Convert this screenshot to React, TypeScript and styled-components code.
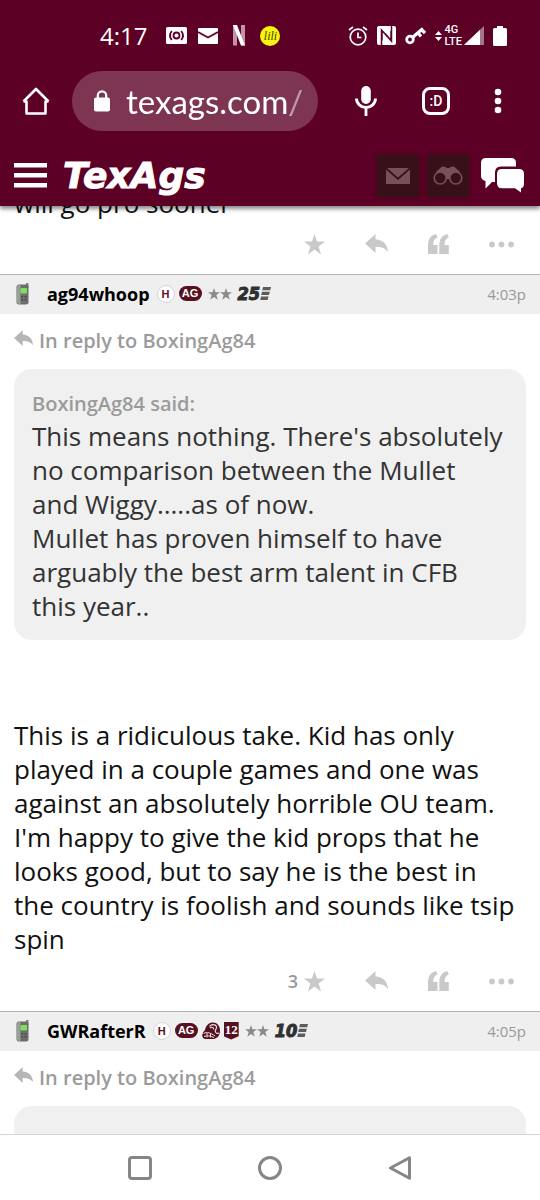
import React from "react";
import styled, { createGlobalStyle } from "styled-components";

const maroon = "#5c0025";
const sans = `"Open Sans", "Noto Sans", sans-serif`;

const GlobalStyle = createGlobalStyle`
  * { box-sizing: border-box; }
  body { margin: 0; background: #fff; font-family: ${sans}; color: #111; }
  button { background: none; border: 0; padding: 0; margin: 0; font: inherit; color: inherit; cursor: pointer; }
  svg { display: block; flex: none; }
  p { margin: 0; }
`;

const Screen = styled.div`
  display: flex;
  flex-direction: column;
  height: 100vh;
`;

const TopChrome = styled.div`
  position: relative;
  z-index: 1;
  flex: none;
  background: ${maroon};
  color: #fff;
  box-shadow: 0 3px 4px rgba(0, 0, 0, 0.45);
`;

const StatusBar = styled.div`
  display: flex;
  align-items: center;
  justify-content: space-between;
  height: 71px;
  padding: 0 33px 0 100px;
`;

const StatusGroup = styled.div<{ $gap: number }>`
  display: flex;
  align-items: center;
  gap: ${(p) => p.$gap}px;
`;

const Clock = styled.time`
  margin-right: 8px;
  font-size: 24px;
  line-height: 30px;
`;

const LiliBadge = styled.span`
  display: grid;
  place-items: center;
  width: 20px;
  height: 20px;
  border-radius: 50%;
  background: #f6f50c;
  color: #4a4300;
  font: italic 12px/20px "Liberation Serif", serif;
`;

const Network = styled.span`
  display: flex;
  flex-direction: column;
  font: 500 11px/12px Roboto, sans-serif;
`;

const BrowserBar = styled.div`
  display: flex;
  align-items: center;
  height: 60px;
  padding: 0 38px 0 22px;
`;

const AddressPill = styled.label`
  display: flex;
  flex: 1;
  align-items: center;
  gap: 16px;
  min-width: 0;
  height: 60px;
  margin: 0 36px 0 22px;
  padding: 0 8px 0 22px;
  border-radius: 30px;
  background: #7d3552;
`;

const AddressInput = styled.input`
  flex: 1;
  min-width: 0;
  padding: 0;
  border: 0;
  outline: 0;
  background: none;
  color: #fff;
  font: 33px/40px Lato, sans-serif;
  mask-image: linear-gradient(to right, #000 163px, rgba(0, 0, 0, 0.5) 165px);
`;

const BrowserActions = styled.div`
  display: flex;
  align-items: center;
  gap: 44px;
`;

const TabsButton = styled.button`
  width: 28px;
  height: 28px;
  border: 3px solid #fff;
  border-radius: 8px;
  font: 500 14px/20px Roboto, sans-serif;
`;

const SiteBar = styled.header`
  display: flex;
  align-items: center;
  height: 75px;
  padding: 14px 16px 0 14px;
`;

const Logo = styled.a`
  margin-left: 16px;
  color: #fff;
  text-decoration: none;
  font: italic bold 36px/40px "DejaVu Sans", sans-serif;
  -webkit-text-stroke: 1px #fff;
`;

const SiteActions = styled.nav`
  display: flex;
  align-items: center;
  gap: 8px;
  margin-left: auto;
`;

const DarkButton = styled.button`
  display: grid;
  place-items: center;
  width: 42px;
  height: 42px;
  background: #38101a;
  box-shadow: 0 0 3px #38101a;
  color: #775158;
`;

const ChatButton = styled.button`
  margin-left: 4px;
`;

const Feed = styled.main`
  flex: 1;
  min-height: 0;
  overflow: hidden;
`;

const CutLine = styled.p`
  display: flex;
  align-items: flex-end;
  height: 14px;
  padding: 0 14px;
  overflow: hidden;
  font-size: 26px;
  line-height: 34px;
`;

const ActionRow = styled.div`
  display: flex;
  align-items: center;
  justify-content: flex-end;
  gap: 40px;
  height: 48px;
  margin-bottom: 6px;
  padding-right: 26px;
  color: #c9c9c9;
`;

const StarButton = styled.button`
  display: flex;
  align-items: center;
  gap: 6px;
`;

const StarCount = styled.span`
  color: #9b9b9b;
  font-size: 18px;
  font-weight: 600;
  line-height: 24px;
`;

const PostBar = styled.header`
  display: flex;
  align-items: center;
  height: 40px;
  padding: 0 14px 2px 16px;
  border-top: 1px solid #b4b4b4;
  background: #efefef;
`;

const UserName = styled.a`
  margin: 0 7px 0 17px;
  color: #000;
  text-decoration: none;
  font-size: 18px;
  font-weight: 700;
  line-height: 24px;
`;

const Badges = styled.span`
  display: flex;
  align-items: center;
  gap: 4px;
`;

const HBadge = styled.span`
  width: 18px;
  height: 18px;
  border: 1px solid #d8d2d3;
  border-radius: 50%;
  background: #fff;
  color: #5c1020;
  text-align: center;
  font: bold 11px/16px "Liberation Sans", sans-serif;
`;

const AgBadge = styled.span`
  width: 23px;
  height: 15px;
  border-radius: 8px;
  background: #561020;
  color: #fff;
  text-align: center;
  font: bold 11px/15px "Liberation Sans", sans-serif;
`;

const ShieldBadge = styled.span`
  width: 15px;
  height: 18px;
  background: #561020;
  clip-path: polygon(0 0, 100% 0, 100% 82%, 50% 100%, 0 82%);
  color: #fff;
  text-align: center;
  font: bold 13px/15px "Liberation Serif", serif;
`;

const Years = styled.span`
  display: flex;
  align-items: center;
  color: #303030;
  font: italic bold 18px/20px "DejaVu Sans Condensed", "DejaVu Sans", sans-serif;
  -webkit-text-stroke: 1px #303030;
`;

const PostTime = styled.time`
  margin-left: auto;
  color: #999;
  font-size: 15px;
  line-height: 24px;
`;

const ReplyTo = styled.a`
  display: flex;
  align-items: center;
  gap: 6px;
  height: 55px;
  padding: 0 14px 2px;
  color: #9b9b9b;
  text-decoration: none;
  font-size: 20px;
  font-weight: 600;
  line-height: 28px;

  svg {
    margin-bottom: 5px;
    color: #b6b6b6;
  }
`;

const Quote = styled.blockquote`
  min-height: 80px;
  margin: 0 14px;
  padding: 20px 18px 17px;
  border-radius: 18px;
  background: #f0f0f0;
  color: #333;
  font-size: 26px;
  line-height: 34px;
`;

const QuoteAuthor = styled.cite`
  display: block;
  color: #9b9b9b;
  font-size: 20px;
  font-style: normal;
  font-weight: 600;
  line-height: 30px;
`;

const PostText = styled.p`
  padding: 78px 20px 1px 14px;
  font-size: 26px;
  line-height: 34px;
`;

const NavBar = styled.nav`
  display: flex;
  flex: none;
  height: 66px;
  padding: 0 14%;
  border-top: 1px solid #d6d6d6;
  background: #fff;
`;

const NavButton = styled.button`
  display: grid;
  flex: 1;
  place-items: center;
`;

const StarIcon = ({ size = 21 }: { size?: number }) => (
  <svg width={size} height={size} viewBox="0 0 21 21" fill="currentColor">
    <path d="M10.5 0 13 7.6h8l-6.4 4.8 2.4 8-6.5-4.8L4 20.400l2.400-8L0 7.600h8z" />
  </svg>
);

const ReplyIcon = ({ width = 23 }: { width?: number }) => (
  <svg width={width} height={Math.round(width * 0.87)} viewBox="0 0 23 20" fill="currentColor">
    <path d="M0 9.500 10.500 0v5.200C18 5.800 22.500 10 23 18c-3-4-6.500-5.200-12.500-5v6z" />
  </svg>
);

const QuoteIcon = () => (
  <svg width="21" height="20" viewBox="0 0 21 20" fill="currentColor">
    <path d="M0 20v-8C0 5 2.500 1.500 8 0l1.500 3.200C6.500 4.500 5.200 7 5.200 11h4.300v9zM11.300 20v-8c0-7 2.500-10.500 8-12l1.500 3.200c-3 1.300-4.300 3.800-4.300 7.800h4.300v9z" />
  </svg>
);

const DotsIcon = () => (
  <svg width="25" height="7" viewBox="0 0 25 7" fill="currentColor">
    <circle cx="3" cy="3.500" r="2.900" />
    <circle cx="12.500" cy="3.500" r="2.900" />
    <circle cx="22" cy="3.500" r="2.900" />
  </svg>
);

const PhoneIcon = () => (
  <svg width="14" height="22" viewBox="0 0 14 22">
    <path d="M10 0h2.500v5H10z" fill="#7f837f" />
    <rect x="0.500" y="1.500" width="12" height="20" rx="2.500" fill="#6b6f6c" />
    <path d="M1 4Q1 2 3 2h1.500v19H3q-2 0-2-2z" fill="#9a9e9b" />
    <rect x="4.500" y="5" width="6.500" height="5.500" rx="1" fill="#7fe05c" />
    <path d="M5 13h2v1.500H5zM8.500 13h2v1.500h-2zM5 16h2v1.500H5zM8.500 16h2v1.500h-2z" fill="#4a4d4b" />
  </svg>
);

const HelmetIcon = () => (
  <svg width="18" height="18" viewBox="0 0 18 18">
    <path d="M3 8C4 3 7 .5 11 .5s7 3.500 7 8-2 8-7 8.500H3q-3-1-2.800-4Q.5 10 3 8z" fill="#561020" />
    <path d="M7.500 4.500C9 2 13.500 1.800 14.500 4.500c.6 2-1.500 3-1.200 5 .3 1.500 2 2.500 3.700 1.500M8 6c2-1.500 4-.5 3.500 1.500" fill="none" stroke="#e8dce0" strokeWidth="1.200" />
    <path d="M1.500 11.500C5 9.500 9 11 13 14M2 14.500c3-1 6-1 10 1M5 11v4.500M8.500 11.500v4" fill="none" stroke="#e8dce0" />
  </svg>
);

const Stripes = () => (
  <svg width="11" height="13" viewBox="0 0 11 13" fill="#5c5c5c">
    <path d="M3 0h8l-.8 3.300H2.200zM2 4.800h7.800L9 8.100H1.200zM1 9.600h7.500L7.700 13H.2z" />
  </svg>
);

const PostActions = ({ stars }: { stars?: number }) => (
  <ActionRow>
    <StarButton aria-label="Star">
      {stars !== undefined && <StarCount>{stars}</StarCount>}
      <StarIcon />
    </StarButton>
    <button aria-label="Reply"><ReplyIcon /></button>
    <button aria-label="Quote"><QuoteIcon /></button>
    <button aria-label="More"><DotsIcon /></button>
  </ActionRow>
);

const TwoStars = styled.span`
  display: flex;
  margin: 0 2px;
  color: #8b8b8b;
`;

type HeadingProps = { user: string; years: number; time: string; extra?: boolean };

const PostHeading = ({ user, years, time, extra }: HeadingProps) => (
  <PostBar>
    <PhoneIcon />
    <UserName href="#user">{user}</UserName>
    <Badges>
      <HBadge>H</HBadge>
      <AgBadge>AG</AgBadge>
      {extra && <HelmetIcon />}
      {extra && <ShieldBadge>12</ShieldBadge>}
      <TwoStars>
        <StarIcon size={12} />
        <StarIcon size={12} />
      </TwoStars>
      <Years>{years}<Stripes /></Years>
    </Badges>
    <PostTime>{time}</PostTime>
  </PostBar>
);

export default function App() {
  return (
    <Screen>
      <GlobalStyle />
      <TopChrome>
        <StatusBar>
          <StatusGroup $gap={11}>
            <Clock>4:17</Clock>
            <svg width="21" height="17" viewBox="0 0 21 17">
              <rect width="21" height="17" rx="1.500" fill="#fff" />
              <g fill="none" stroke={maroon} strokeWidth="1.800">
                <circle cx="10.500" cy="8.500" r="3" />
                <path d="M5.800 4q-3.600 4.500 0 9M15.200 4q3.600 4.500 0 9" />
              </g>
            </svg>
            <svg width="20" height="16" viewBox="0 0 20 16">
              <rect width="20" height="16" rx="1" fill="#fff" />
              <path d="M0 4l10 5.500L20 4" fill="none" stroke={maroon} strokeWidth="1.800" />
            </svg>
            <svg width="20" height="21" viewBox="0 0 20 21">
              <path d="M4 0h4v20.500H4zM12 0h4v20.500h-4z" fill="#c493a8" />
              <path d="M4 0h4l8 20.500h-4z" fill="#fff" />
            </svg>
            <LiliBadge>lili</LiliBadge>
          </StatusGroup>
          <StatusGroup $gap={9}>
            <svg width="20" height="20" viewBox="0 0 20 20" fill="none" stroke="#fff" strokeWidth="1.700">
              <circle cx="10" cy="11" r="7.800" />
              <path d="M10 6.500V11.500h3.500M1 4l4-3M19 4l-4-3" />
            </svg>
            <svg width="19" height="19" viewBox="0 0 19 19">
              <rect width="19" height="19" rx="2" fill="#fff" />
              <path d="M4.500 19V4l9.500 10.500V5M5 4.500v10M14.500 0v15L8.500 8" fill="none" stroke={maroon} strokeWidth="1.500" />
            </svg>
            <svg width="21" height="19" viewBox="0 0 21 19" fill="none" stroke="#fff">
              <circle cx="5" cy="13.500" r="3.300" strokeWidth="2.800" />
              <path d="M8 11 18 2.500M13 7l3 3.500M17 4l3 3" strokeWidth="3.200" />
            </svg>
            <StatusGroup $gap={2}>
              <svg width="7" height="10" viewBox="0 0 7 10" fill="#fff">
                <path d="M3.500 0 7 4H0zM0 6h7l-3.500 4z" />
              </svg>
              <Network><span>4G</span><span>LTE</span></Network>
              <svg width="20" height="19" viewBox="0 0 20 19">
                <path d="M0 19 20 0v19z" fill="#a5758a" />
                <path d="M0 19 16 3.800V19z" fill="#fff" />
              </svg>
            </StatusGroup>
            <svg width="14" height="20" viewBox="0 0 14 20" fill="#fff">
              <path d="M4 0h6v2h2.500Q14 2 14 3.500v15q0 1.500-1.500 1.500h-11Q0 20 0 18.500v-15Q0 2 1.500 2H4z" />
            </svg>
          </StatusGroup>
        </StatusBar>
        <BrowserBar>
          <button aria-label="Home">
            <svg width="28" height="28" viewBox="0 0 28 28" fill="none" stroke="#fff" strokeWidth="2.600">
              <path d="M1.500 14.500 14 2l12.500 12.500M1.500 14.500H4.500V26.500h19V14.500h3" strokeLinejoin="round" />
            </svg>
          </button>
          <AddressPill>
            <svg width="16" height="22" viewBox="0 0 16 22">
              <rect y="7.500" width="16" height="14" rx="2" fill="#fff" />
              <path d="M3.800 8V5.500a4.200 4.200 0 0 1 8.400 0V8" fill="none" stroke="#fff" strokeWidth="2.200" />
            </svg>
            <AddressInput aria-label="Address" defaultValue="texags.com/" />
          </AddressPill>
          <BrowserActions>
            <button aria-label="Voice search">
              <svg width="24" height="30" viewBox="0 0 24 30">
                <rect x="7.200" y="0" width="9.600" height="18" rx="4.800" fill="#fff" />
                <path d="M2.500 12.500a9.500 9 0 0 0 19 0M12 21.500V30" fill="none" stroke="#fff" strokeWidth="2.800" />
              </svg>
            </button>
            <TabsButton>:D</TabsButton>
            <button aria-label="Menu">
              <svg width="8" height="26" viewBox="0 0 8 26" fill="#fff">
                <circle cx="4" cy="4" r="3.300" />
                <circle cx="4" cy="13" r="3.300" />
                <circle cx="4" cy="22" r="3.300" />
              </svg>
            </button>
          </BrowserActions>
        </BrowserBar>
        <SiteBar>
          <button aria-label="Site menu">
            <svg width="33" height="26" viewBox="0 0 33 26" fill="#fff">
              <path d="M0 0h33v4.500H0zM0 10h33v4.500H0zM0 20h33v4.500H0z" />
            </svg>
          </button>
          <Logo href="#home">TexAgs</Logo>
          <SiteActions>
            <DarkButton aria-label="Messages">
              <svg width="24" height="16" viewBox="0 0 24 16" fill="currentColor">
                <path d="M1 0h22L12 9.500zM0 1.500l12 10.500L24 1.500V16H0z" />
              </svg>
            </DarkButton>
            <DarkButton aria-label="Watched topics">
              <svg width="30" height="19" viewBox="0 0 30 19">
                <path d="M3 6 9 .5l4 .5v1h4V1l4-.5L27 6l-9 7h-6z" fill="currentColor" />
                <circle cx="7.200" cy="12" r="6" fill="#38101a" stroke="currentColor" strokeWidth="1.600" />
                <circle cx="22.800" cy="12" r="6" fill="#38101a" stroke="currentColor" strokeWidth="1.600" />
              </svg>
            </DarkButton>
            <ChatButton aria-label="Forums">
              <svg width="43" height="35" viewBox="0 0 43 35" fill="#fff">
                <path d="M5 0h25q5 0 5 5v3.500H20q-6 0-6 6v9.500h-3L4.500 30.500V23Q0 22 0 18V5Q0 0 5 0z" />
                <path d="M21 11h17q5 0 5 5v9.500q0 4-3 4.800V34.500l-6-4.200H21q-5 0-5-5V16q0-5 5-5z" />
              </svg>
            </ChatButton>
          </SiteActions>
        </SiteBar>
      </TopChrome>
      <Feed>
        <article>
          <CutLine>will go pro sooner</CutLine>
          <PostActions />
        </article>
        <article>
          <PostHeading user="ag94whoop" years={25} time="4:03p" />
          <ReplyTo href="#parent"><ReplyIcon width={19} />In reply to BoxingAg84</ReplyTo>
          <Quote>
            <QuoteAuthor>BoxingAg84 said:</QuoteAuthor>
            <p>This means nothing. There's absolutely no comparison between the Mullet and Wiggy.....as of now.</p>
            <p>Mullet has proven himself to have arguably the best arm talent in CFB this year..</p>
          </Quote>
          <PostText>
            This is a ridiculous take. Kid has only played in a couple games and one was against an absolutely
            horrible OU team. I'm happy to give the kid props that he looks good, but to say he is the best in
            the country is foolish and sounds like tsip spin
          </PostText>
          <PostActions stars={3} />
        </article>
        <article>
          <PostHeading user="GWRafterR" years={10} time="4:05p" extra />
          <ReplyTo href="#parent"><ReplyIcon width={19} />In reply to BoxingAg84</ReplyTo>
          <Quote />
        </article>
      </Feed>
      <NavBar>
        <NavButton aria-label="Recent apps">
          <svg width="24" height="24" viewBox="0 0 24 24" fill="none" stroke="#868686" strokeWidth="3">
            <rect x="1.500" y="1.500" width="21" height="21" rx="2.500" />
          </svg>
        </NavButton>
        <NavButton aria-label="Home screen">
          <svg width="24" height="24" viewBox="0 0 24 24" fill="none" stroke="#868686" strokeWidth="3">
            <circle cx="12" cy="12" r="10.500" />
          </svg>
        </NavButton>
        <NavButton aria-label="Back">
          <svg width="24" height="24" viewBox="0 0 24 24" fill="none" stroke="#868686" strokeWidth="3" strokeLinejoin="round">
            <path d="M21.500 1.800v20.400L2.500 12z" />
          </svg>
        </NavButton>
      </NavBar>
    </Screen>
  );
}
